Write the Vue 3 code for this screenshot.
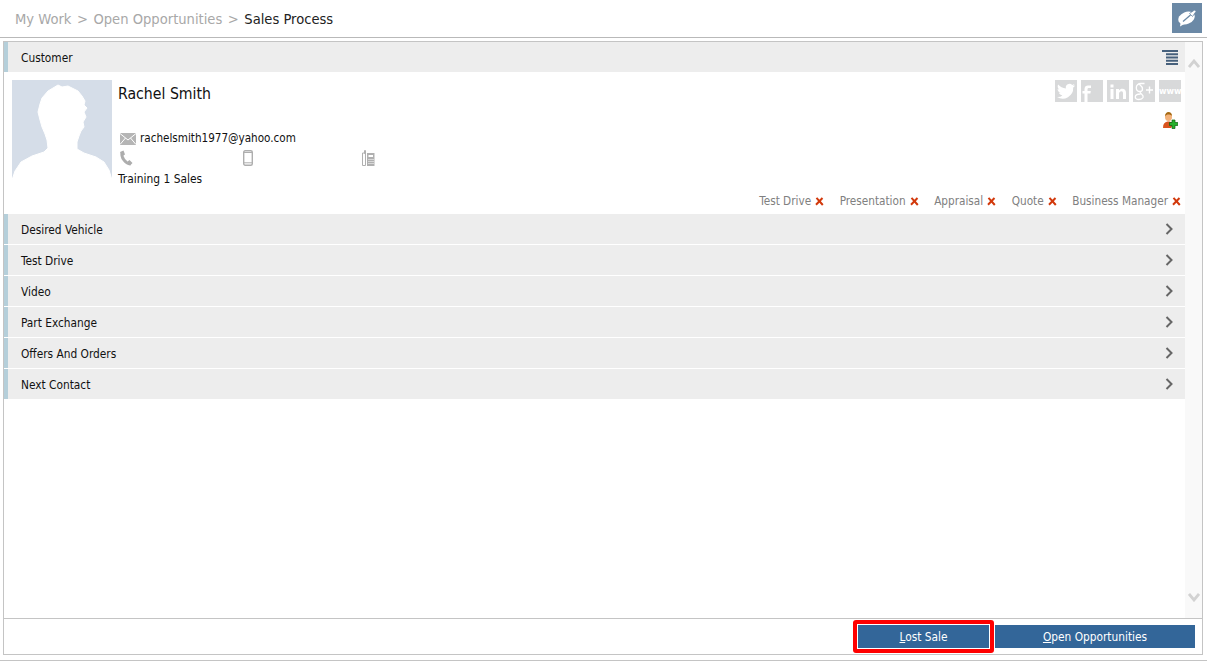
<script setup>
const rows = ['Desired Vehicle', 'Test Drive', 'Video', 'Part Exchange', 'Offers And Orders', 'Next Contact']
const tags = ['Test Drive', 'Presentation', 'Appraisal', 'Quote', 'Business Manager']
</script>

<template>
  <div class="page">
    <header class="topbar">
      <div class="crumbs">
        <span class="dim">My Work</span><span class="dim sep">&gt;</span><span class="dim">Open Opportunities</span><span class="dim sep">&gt;</span><span>Sales Process</span>
      </div>
      <button class="note-btn" aria-label="Notes">
        <svg width="20" height="18" viewBox="0 0 20 18">
          <ellipse cx="9.500" cy="9" rx="8.500" ry="6" transform="rotate(-22 9.500 9)" fill="#fff"/>
          <path d="M4 12L3 17.500L9 14Z" fill="#fff"/>
          <path d="M6 12.500L13.500 6" stroke="#6b89a6" stroke-width="1.300" fill="none"/>
          <path d="M12.500 4.500L17.500 1L19 2.500L15.500 7.500Z" fill="#fff" stroke="#6b89a6" stroke-width=".8"/>
        </svg>
      </button>
    </header>

    <main class="frame">
      <div class="body">
        <div class="content">
          <div class="sec-head first">
            <span>Customer</span>
            <svg class="list-ic" width="16" height="15" viewBox="0 0 16 15">
              <path d="M0 1h16M4 4.300h12M4 7.500h12M4 10.700h12M4 14h12" stroke="#46607c" stroke-width="2"/>
            </svg>
          </div>

          <section class="customer">
            <svg class="avatar" width="100" height="100" viewBox="0 0 100 100">
              <rect width="100" height="100" fill="#d5dde8"/>
              <path d="M46 5L50 7L56 6L62 9L66 11L70 16L73 21L72 25L75 28L72 32L74 37L71 42L72 47L69 51L67 56L65 62L65 69L72 73L84 77L92 82L97 90L100 100L0 100L3 91L9 82L20 76L32 72L36 68L35 60L33 54L30 47L28 40L26 32L28 24L30 18L36 11L41 8Z" fill="#fff" stroke="#fff" stroke-linejoin="round"/>
            </svg>
            <div class="info">
              <div class="name">Rachel Smith</div>
              <div class="email">
                <svg width="16" height="12" viewBox="0 0 16 12">
                  <rect width="16" height="12" fill="#b5b5b5"/>
                  <path d="M0 .5L8 7L16 .5M0 11.500L5.500 5M16 11.500L10.500 5" stroke="#fff" stroke-width="1" fill="none"/>
                </svg>
                <span>rachelsmith1977@yahoo.com</span>
              </div>
              <div class="phones">
                <div class="ph">
                  <svg width="14" height="16" viewBox="0 0 14 16">
                    <path d="M3 2.500C2 7 6 13.500 11.500 14" fill="none" stroke="#adadad" stroke-width="3"/>
                    <path d="M1 2L4.500 .5L6 4.500L3.500 6ZM8.500 11.500L10.500 10L13.500 13L11 15.500Z" fill="#adadad"/>
                  </svg>
                </div>
                <div class="ph">
                  <svg width="10" height="16" viewBox="0 0 10 16">
                    <rect x=".7" y=".7" width="8.600" height="14.600" rx="1.500" fill="none" stroke="#aeaeae" stroke-width="1.400"/>
                    <path d="M1 12.800h8M1 2.500h8" stroke="#aeaeae"/>
                  </svg>
                </div>
                <div class="ph">
                  <svg width="13" height="16" viewBox="0 0 13 16">
                    <path d="M.5 3h3v12.500h-3zM2.500 .5h1v3h-1z" fill="none" stroke="#b0b0b0"/>
                    <path d="M5 3h7.500v13H5z" fill="#b0b0b0"/>
                    <path d="M6.500 5h4.500v2h-4.500zM6.500 9h1v1h-1zM8.500 9h1v1h-1zM10.500 9h1v1h-1zM6.500 11h1v1h-1zM8.500 11h1v1h-1zM10.500 11h1v1h-1zM6.500 13h1v1h-1zM8.500 13h1v1h-1zM10.500 13h1v1h-1z" fill="#fff"/>
                  </svg>
                </div>
              </div>
              <div class="company">Training 1 Sales</div>
            </div>
            <div class="side">
              <div class="social">
                <div class="soc">
                  <svg width="22" height="22" viewBox="0 0 22 22">
                    <path d="M20 5.500c-.7.300-1.400.500-2.100.600.800-.5 1.300-1.200 1.600-2-.7.400-1.500.700-2.300.9a3.700 3.700 0 0 0-6.300 3.400C7.800 8.200 5 6.700 3.200 4.500c-1 1.700-.5 3.900 1.100 5-.6 0-1.200-.2-1.700-.5 0 1.800 1.300 3.400 3 3.700-.5.200-1.100.2-1.700.1.500 1.500 1.900 2.500 3.500 2.600A7.500 7.500 0 0 1 2 16.900 10.500 10.500 0 0 0 18.200 7.600c.7-.5 1.300-1.200 1.800-2.100Z" fill="#fff"/>
                  </svg>
                </div>
                <div class="soc">
                  <svg width="22" height="22" viewBox="0 0 22 22">
                    <path d="M3.500 22V13.500H1.500V11H3.500V9C3.500 6.500 5 5.500 7 5.500H10V8H8C7 8 6.500 8.500 6.500 9.300V11H9.800L9.400 13.500H6.500V22Z" fill="#fff"/>
                  </svg>
                </div>
                <div class="soc">
                  <svg width="22" height="22" viewBox="0 0 22 22">
                    <path d="M3.500 9h3v10h-3zM3.500 4.500h3v3h-3zM9 9h3v1.500C12.800 9.300 14 8.800 15.200 8.800 18 8.800 19 10.600 19 13v6h-3v-5.500c0-1.400-.4-2.300-1.600-2.300-1.300 0-2.400 1-2.400 2.500V19H9Z" fill="#fff"/>
                  </svg>
                </div>
                <div class="soc">
                  <svg width="22" height="22" viewBox="0 0 22 22">
                    <path d="M11.500 3.500H8C5 3.500 3.300 5.500 3.300 7.700 3.300 10 5 11.500 7 11.500c1.500 0 2.500-1 2.500-2.500 0-3-3-4-3-4.500M7.500 11.500c-1 1.500 0 1.800 1.200 2.800 1.500 1.200 1.800 2 1.300 3.200-.7 1.300-2.300 2-4 2-2.200 0-3.700-1-3.700-2.500 0-2 2.700-3 5.200-3" fill="none" stroke="#fff" stroke-width="1.300"/>
                    <path d="M13 10h7M16.500 6.500v7" stroke="#fff" stroke-width="1.400"/>
                  </svg>
                </div>
                <div class="soc www">www</div>
              </div>
              <svg class="add-user" width="15" height="17" viewBox="0 0 15 17">
                <path d="M0 16c0-4 1.500-6 4.500-6.500h2c2 .3 3 1.500 3.500 3L8 16Z" fill="#d9541e"/>
                <ellipse cx="5.500" cy="5" rx="3.500" ry="4" fill="#f3b27a"/>
                <path d="M2 4.500C2 1.500 3.500 0 5.500 0S9 1.500 9 4c-1-1-2-1.500-3.500-1.500S3 3 2 4.500Z" fill="#a66a14"/>
                <path d="M9 8h3v2.500h2.800v3H12V16.500H9V13.500H6.500v-3H9Z" fill="#26b02c" stroke="#0c5f10" stroke-width=".7"/>
              </svg>
            </div>
          </section>

          <div class="tags">
            <span v-for="t in tags" :key="t" class="tag">
              {{ t }}
              <svg width="9" height="9" viewBox="0 0 9 9">
                <path d="M1.500 .8L7.800 8M7.500 1L1 7.800" stroke="#d2390c" stroke-width="2"/>
              </svg>
            </span>
          </div>

          <div class="rows">
            <div v-for="r in rows" :key="r" class="sec-head row">
              <span>{{ r }}</span>
              <svg class="chev" width="8" height="12" viewBox="0 0 8 12">
                <path d="M1.500 1L6.500 6L1.500 11" fill="none" stroke="#666" stroke-width="2"/>
              </svg>
            </div>
          </div>
        </div>

        <aside class="scroll">
          <svg width="12" height="9" viewBox="0 0 12 9"><path d="M1 8L6 2L11 8" fill="none" stroke="#d2d2d2" stroke-width="2.800"/></svg>
          <svg width="12" height="9" viewBox="0 0 12 9"><path d="M1 1L6 7L11 1" fill="none" stroke="#d2d2d2" stroke-width="2.800"/></svg>
        </aside>
      </div>

      <footer class="foot">
        <span class="focus-ring"><button class="btn lost"><u>L</u>ost Sale</button></span>
        <button class="btn open"><u>O</u>pen Opportunities</button>
      </footer>
    </main>

    <div class="end-line"></div>
  </div>
</template>

<style>
html, body { margin: 0; padding: 0; background: #fff; }
</style>

<style scoped>
.page {
  width: 1207px;
  height: 661px;
  overflow: hidden;
  display: flex;
  flex-direction: column;
  font-family: "DejaVu Sans", "Liberation Sans", sans-serif;
  font-stretch: condensed;
  font-size: 11.8px;
  color: #111;
}
.topbar {
  height: 37px;
  flex: none;
  border-bottom: 1px solid #b9b9b9;
  display: flex;
  align-items: flex-start;
  justify-content: space-between;
  padding-right: 5px;
}
.crumbs { margin: 10px 0 0 15px; font-size: 14.6px; line-height: 18px; color: #222; white-space: nowrap; }
.dim { color: #a8a8a8; }
.sep { margin: 0 5.500px; }
.note-btn {
  margin-top: 3px;
  width: 30px;
  height: 30px;
  padding: 0;
  border: 0;
  background: #6b89a6;
  display: flex;
  align-items: center;
  justify-content: center;
}
.frame {
  margin: 3px 4px 0 3px;
  height: 612px;
  flex: none;
  border: 1px solid #c4c4c4;
  display: flex;
  flex-direction: column;
}
.body { flex: 1; min-height: 0; display: flex; }
.content { width: 1181px; flex: none; }
.scroll {
  flex: 1;
  background: #f9f9f9;
  display: flex;
  flex-direction: column;
  justify-content: space-between;
  align-items: center;
  padding: 17px 0 16px;
}
.sec-head {
  height: 30px;
  box-sizing: border-box;
  background: #ededed;
  border-left: 4px solid #b5cfda;
  padding: 2px 7px 0 13px;
  display: flex;
  align-items: center;
  justify-content: space-between;
  line-height: 15px;
}
.sec-head svg { margin-top: -2px; }
.row { padding-right: 12px; }
.rows { display: flex; flex-direction: column; gap: 1px; }
.customer { height: 122px; box-sizing: border-box; padding: 8px 4px 0 8px; display: flex; }
.avatar { flex: none; }
.info { margin-left: 6px; flex: 1; }
.name { font-size: 15.7px; line-height: 20px; margin-top: 4px; }
.email { margin: 27px 0 0 2px; display: flex; align-items: center; gap: 4px; line-height: 15px; height: 15px; font-size: 11.6px; }
.phones { display: flex; height: 18px; margin-top: 4px; }
.ph { width: 124px; padding-left: 1px; box-sizing: border-box; }
.ph:nth-child(2) { width: 119px; }
.company { line-height: 15px; margin-top: 4px; font-size: 11.9px; }
.side { display: flex; flex-direction: column; align-items: flex-end; }
.social { display: flex; gap: 4px; }
.soc { width: 22px; height: 22px; background: #d8d9da; overflow: hidden; }
.soc svg { display: block; }
.www { color: #fff; font-size: 9px; font-weight: 700; line-height: 22px; text-align: center; }
.add-user { margin-top: 10px; margin-right: 3px; }
.tags {
  height: 14px;
  margin-bottom: 6px;
  padding-right: 4px;
  display: flex;
  justify-content: flex-end;
  gap: 15.500px;
  line-height: 14px;
  color: #808080;
  font-size: 11.7px;
}
.tag { display: inline-flex; align-items: center; gap: 4px; white-space: nowrap; }
.foot {
  height: 35px;
  flex: none;
  border-top: 1px solid #c4c4c4;
  display: flex;
  align-items: center;
  justify-content: flex-end;
  padding-right: 7px;
}
.focus-ring {
  border: 4px solid #f00;
  border-radius: 3px;
  margin-right: 1px;
  display: flex;
}
.btn {
  border: 0;
  background: #336699;
  color: #fff;
  font-family: inherit;
  font-size: 11.8px;
  font-stretch: condensed;
  height: 23px;
  padding: 0;
  cursor: pointer;
}
.lost { width: 133px; height: 25px; border: 1px solid #fff; box-sizing: border-box; }
.open { width: 200px; }
.end-line { margin-top: 5px; height: 1px; background: #c4c4c4; flex: none; }
</style>
